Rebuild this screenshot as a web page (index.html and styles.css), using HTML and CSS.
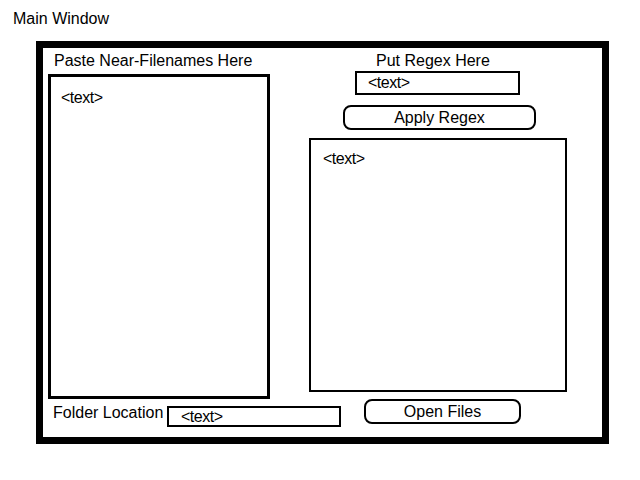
FILE: index.html
```html
<!DOCTYPE html>
<html>
<head>
<meta charset="utf-8">
<link rel="stylesheet" href="styles.css">
</head>
<body>
<div class="title">Main Window</div>
<div class="frame">
  <div class="top">
    <div class="left-col">
      <div class="label left-label">Paste Near-Filenames Here</div>
      <div class="area left-area"><span class="ph">&lt;text&gt;</span></div>
    </div>
    <div class="right-col">
      <div class="label regex-label">Put Regex Here</div>
      <div class="field regex-field"><span class="ph">&lt;text&gt;</span></div>
      <div class="btn apply-btn">Apply Regex</div>
      <div class="area right-area"><span class="ph">&lt;text&gt;</span></div>
    </div>
  </div>
  <div class="bottom">
    <div class="label folder-label">Folder Location</div>
    <div class="field folder-field"><span class="ph">&lt;text&gt;</span></div>
    <div class="btn open-btn">Open Files</div>
  </div>
</div>
</body>
</html>
```
FILE: styles.css
```css
html, body {
  margin: 0;
  padding: 0;
  background: #fff;
}
body {
  font-family: "Liberation Sans", Arial, Helvetica, sans-serif;
  font-size: 16px;
  color: #000;
  width: 640px;
  height: 480px;
}
.title {
  padding: 10px 0 0 13px;
  line-height: 18px;
}
.frame {
  box-sizing: border-box;
  margin: 13px 0 0 36px;
  width: 573px;
  height: 403px;
  border: 7px solid #000;
  padding: 4px 0 0 5px;
  display: flex;
  flex-direction: column;
}
.top {
  display: flex;
  align-items: flex-start;
}
.label {
  line-height: 18px;
  white-space: nowrap;
}
.left-col {
  width: 222px;
  display: flex;
  flex-direction: column;
}
.left-label {
  padding-left: 6px;
}
.area {
  box-sizing: border-box;
  border: 2px solid #000;
  line-height: 18px;
}
.left-area {
  margin-top: 4px;
  width: 222px;
  height: 325px;
  border-width: 3px;
  padding: 12px 0 0 10px;
}
.right-col {
  margin-left: 39px;
  width: 258px;
  display: flex;
  flex-direction: column;
  align-items: flex-start;
}
.regex-label {
  margin-left: 67px;
}
.field {
  box-sizing: border-box;
  border: 2px solid #000;
  line-height: 16px;
}
.regex-field {
  margin: 1px 0 0 46px;
  width: 165px;
  height: 24px;
  padding: 2px 0 0 11px;
}
.btn {
  box-sizing: border-box;
  border: 2px solid #000;
  border-radius: 8px;
  display: flex;
  align-items: center;
  justify-content: center;
  line-height: 18px;
}
.apply-btn {
  margin: 10px 0 0 34px;
  width: 193px;
  height: 25px;
}
.right-area {
  margin-top: 8px;
  width: 258px;
  height: 254px;
  padding: 10px 0 0 12px;
}
.bottom {
  display: flex;
  align-items: flex-start;
}
.folder-label {
  margin: 5px 0 0 5px;
  width: 109px;
}
.folder-field {
  margin: 7px 0 0 5px;
  width: 174px;
  height: 21px;
  line-height: 15px;
  padding: 1px 0 0 12px;
}
.open-btn {
  margin: 0 0 0 23px;
  width: 157px;
  height: 25px;
}
.ph {
  letter-spacing: -0.5px;
}
```
